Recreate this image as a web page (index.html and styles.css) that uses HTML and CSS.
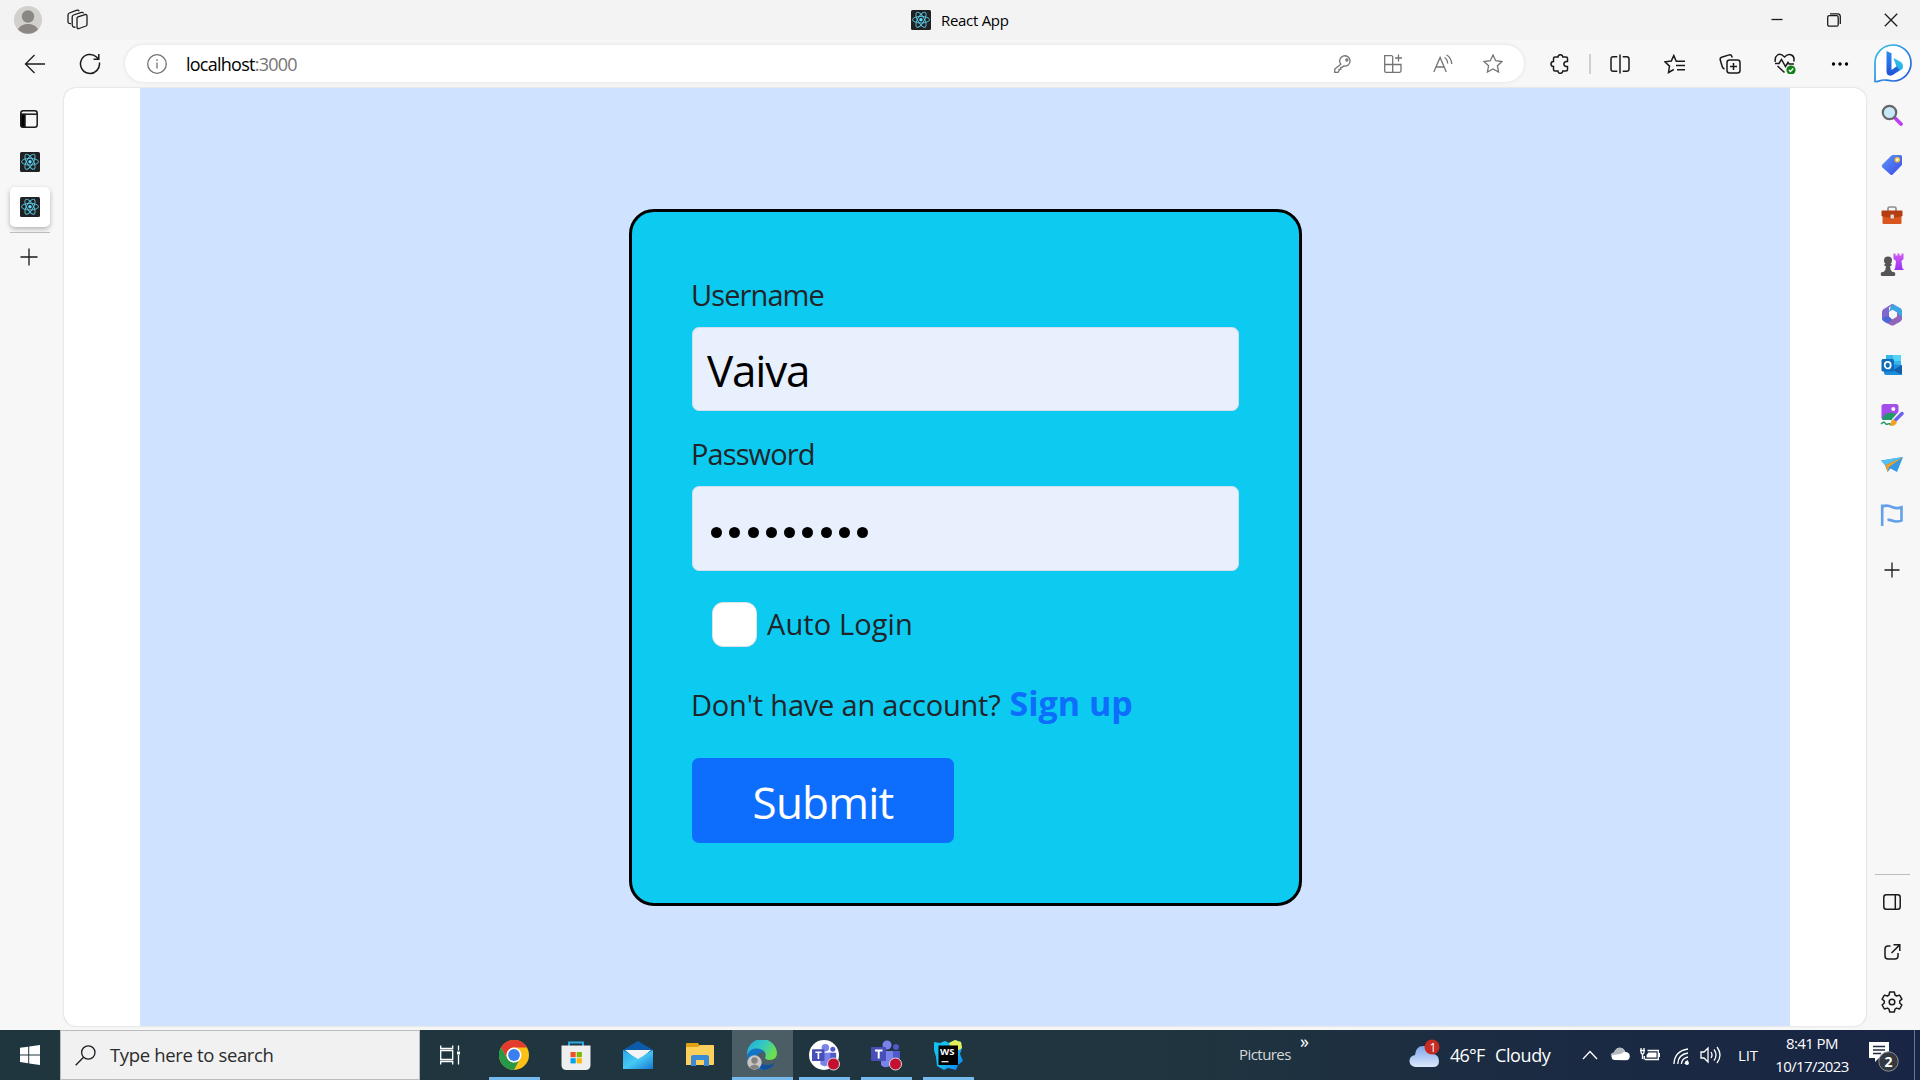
FILE: index.html
```html
<!DOCTYPE html>
<html lang="en">
<head>
<meta charset="utf-8">
<title>React App</title>
<link rel="stylesheet" href="styles.css">
</head>
<body>
<svg class="defs" width="0" height="0">
  <defs>
    <symbol id="react" viewBox="0 0 20 20">
      <rect width="20" height="20" rx="1.5" fill="#202123"/>
      <g fill="none" stroke="#58c4dc" stroke-width=".95">
        <ellipse cx="10" cy="9.7" rx="8.5" ry="3.3"/>
        <ellipse cx="10" cy="9.7" rx="8.5" ry="3.3" transform="rotate(60 10 9.7)"/>
        <ellipse cx="10" cy="9.7" rx="8.5" ry="3.3" transform="rotate(120 10 9.7)"/>
      </g>
      <circle cx="10" cy="9.7" r="1.7" fill="#61dafb"/>
    </symbol>
    <symbol id="teams" viewBox="0 0 30 30">
      <circle cx="25" cy="7" r="3" fill="#5059c9"/><circle cx="16" cy="5" r="4.5" fill="#7b83eb"/>
      <path d="M20 11h9v8a5 5 0 0 1-9 3z" fill="#5059c9"/>
      <path d="M10 11h12v9a7 7 0 0 1-12 5z" fill="#7b83eb"/>
      <rect x="0" y="7" width="15" height="14" rx="1" fill="#464eb8"/>
      <path d="M4 10.500h7.500M7.700 10.500v8" stroke="#fff" stroke-width="2"/>
    </symbol>
    <linearGradient id="bing" x1="0" y1="0" x2="1" y2="1"><stop offset="0" stop-color="#35c4f0"/><stop offset="1" stop-color="#2457d6"/></linearGradient>
    <linearGradient id="bing-stem" x1="0" y1="0" x2="0" y2="1"><stop offset="0" stop-color="#2f8df0"/><stop offset="1" stop-color="#1f52d8"/></linearGradient>
    <linearGradient id="bing-bowl" x1="1" y1="0" x2="0" y2="1"><stop offset="0" stop-color="#2bd3e6"/><stop offset="1" stop-color="#2b7bf0"/></linearGradient>
    <linearGradient id="tag" x1="0" y1="0" x2="1" y2="1"><stop offset="0" stop-color="#5a9bf8"/><stop offset="1" stop-color="#3f46e8"/></linearGradient>
    <linearGradient id="rook" x1="0" y1="0" x2="0" y2="1"><stop offset="0" stop-color="#d05cf5"/><stop offset="1" stop-color="#9b30f0"/></linearGradient>
    <linearGradient id="edge" x1="0" y1="0" x2="1" y2=".5"><stop offset="0" stop-color="#1fa8e0"/><stop offset=".55" stop-color="#35c9c2"/><stop offset="1" stop-color="#6be04c"/></linearGradient>
    <linearGradient id="mail" x1="0" y1="0" x2="1" y2="1"><stop offset="0" stop-color="#28a8e8"/><stop offset=".5" stop-color="#46c8f5"/><stop offset="1" stop-color="#1678d0"/></linearGradient>
    <linearGradient id="cloud" x1="0" y1="0" x2="0" y2="1"><stop offset="0" stop-color="#7ba6ea"/><stop offset="1" stop-color="#dde8fb"/></linearGradient>
    <linearGradient id="ws" x1="0" y1="0" x2="1" y2="1"><stop offset="0" stop-color="#12c2ef"/><stop offset=".5" stop-color="#19bcf0"/><stop offset="1" stop-color="#087cfa"/></linearGradient>
  </defs>
</svg>

<header class="titlebar">
  <svg class="avatar" width="28" height="28" viewBox="0 0 28 28"><circle cx="14" cy="14" r="14" fill="#d2d0cc"/><circle cx="14" cy="10.500" r="6.200" fill="#8b8783"/><path d="M4 23.500c2-4 6-5.500 10-5.500s8 1.500 10 5.500a14 14 0 0 1-20 0z" fill="#8b8783"/></svg>
  <svg class="workspaces ico" width="22" height="22" viewBox="0 0 22 22"><path d="M10 9.500q0-1.200 1-1.600l7-2.300q2-.5 2 1.400v8.500q0 1.100-1 1.500l-7 2.500q-2 .5-2-1.500zM8.500 18.200q-3.300.4-3.300-2.700V8q0-1.500 1.300-2l8-2.600q1.800-.4 2.200 1M4 14.600q-3 .3-3-2V6q0-1.500 1.400-2l7.600-2.800q1.500-.4 2.200 1"/></svg>
  <div class="window-title"><svg width="20" height="20"><use href="#react"/></svg><span>React App</span></div>
  <div class="window-buttons">
    <svg class="ico" width="14" height="14" viewBox="0 0 14 14"><path d="M1.500 6.500h11"/></svg>
    <svg class="ico" width="14" height="14" viewBox="0 0 14 14"><rect x=".7" y="2.700" width="10.500" height="10.500" rx="1.500"/><path d="M3 .8h7.500q2.800 0 2.800 2.800V11"/></svg>
    <svg class="ico" width="14" height="14" viewBox="0 0 14 14"><path d="M.8.8l12.400 12.400M13.200.8L.8 13.200"/></svg>
  </div>
</header>

<nav class="toolbar">
  <span class="cell back"><svg class="ico" width="22" height="20" viewBox="0 0 22 20"><path d="M21 10H1.500M10.500 1l-9 9 9 9"/></svg></span>
  <span class="cell reload"><svg class="ico thick" width="22" height="22" viewBox="0 0 22 22"><path d="M20.400 9.500A9.500 9.500 0 1 1 17.500 4l2 2M19.800 1v5.300h-5.300"/></svg></span>
  <div class="address">
    <svg class="ico gray" width="20" height="20" viewBox="0 0 20 20"><circle cx="10" cy="10" r="9.300"/><path d="M10 8.500v6M10 5.300v1.600"/></svg>
    <span class="url">localhost<span class="port">:3000</span></span>
    <div class="address-actions">
      <span class="cell"><svg class="ico gray" width="18" height="18" viewBox="0 0 18 18"><path d="M6.800 9.200A5.200 5.200 0 1 1 9.600 11L8.300 12.300H6.800v2H5v1.600L4 17.300H.8v-3.200z"/><circle cx="12.800" cy="5" r="1"/></svg></span>
      <span class="cell"><svg class="ico gray" width="20" height="20" viewBox="0 0 20 20"><path d="M9.200 1.700H1.700V17q0 1.300 1.300 1.300h13.500q1.500 0 1.500-1.500V10.500H1.700M9.700 1.700v16.600M15.500.5v7M12 4h7"/></svg></span>
      <span class="cell"><svg class="ico gray" width="20" height="20" viewBox="0 0 20 20"><path d="M.8 18L7.100 3.400 13.300 18M3 13h8.200M11.500 3.500q2.800 1.500 3.200 6M13.500 1q4.700 2.400 5.300 9"/></svg></span>
      <span class="cell"><svg class="ico gray" width="20" height="20" viewBox="0 0 20 20"><path d="M10 1l2.700 5.700 6.300.8-4.600 4.300 1.200 6.200L10 15l-5.600 3 1.200-6.200L1 7.500l6.300-.8z"/></svg></span>
    </div>
  </div>
  <div class="actions">
    <span class="cell"><svg class="ico thick" width="20" height="20" viewBox="0 0 20 20"><path d="M5 3h3q0-2.300 2.400-2.300T12.800 3H16q1.500 0 1.500 1.500v3h-1q-2.600.3-2.600 2.500t2.600 2.500h1v3Q17.500 17 16 17h-3.200q0 2.300-2.400 2.300T8 17H5q-1.500 0-1.500-1.500v-3Q1 12.500 1 10t2.500-2.500v-3Q3.500 3 5 3z"/></svg></span>
    <i class="sep"></i>
    <span class="cell"><svg class="ico thick" width="20" height="20" viewBox="0 0 20 20"><path d="M7.300 2.700H3.200Q1 2.700 1 5v10q0 2.300 2.200 2.300h4.100M10 .5v19M12.700 2.700h4Q19 2.700 19 5v10q0 2.300-2.300 2.300h-4"/></svg></span>
    <span class="cell"><svg class="ico thick" width="22" height="20" viewBox="0 0 22 20"><path d="M14.500 7.200h-2.300L9.800 1.500 7.300 7 1 7.800l4.500 4.300L4.500 18.500l5.300-3M13 7.200h8M12 11.500h9M13 15.800h8"/></svg></span>
    <span class="cell"><svg class="ico thick" width="22" height="20" viewBox="0 0 22 20"><rect x="8" y="6" width="13" height="13" rx="2.500"/><path d="M14.500 9v7M11 12.500h7M5.500 15Q3.700 14.500 3.200 12.500L1.200 5.800Q.8 3.900 2.600 3.300l7.600-2.400q2-.4 2.600 1.300l.4 1.300"/></svg></span>
    <span class="cell"><svg class="ico thick" width="22" height="21" viewBox="0 0 22 21"><path d="M1.300 8.800Q.5 4 3.500 2T10.500 4Q14 .2 17.500 2t2.200 6.500M1 10.500h4l2.500-4 4 7 2.500-4 1 1.500h5M3.500 13l7 6.500"/><circle cx="17" cy="17" r="4.600" fill="#128019" stroke="none"/><path d="M15 17l1.500 1.500 2.700-3" stroke="#fff"/></svg></span>
    <span class="cell"><svg width="18" height="6" viewBox="0 0 18 6"><circle cx="2.500" cy="3" r="1.700"/><circle cx="9" cy="3" r="1.700"/><circle cx="15.500" cy="3" r="1.700"/></svg></span>
    <span class="cell bing"><svg width="38" height="39" viewBox="0 0 38 39"><path d="M1 37.500V19.500A18 18 0 1 1 19.500 37q-3 0-7-.8-4-.6-7 .7-2.500 1-4.500.6z" fill="#fff" stroke="url(#bing)" stroke-width="1.700"/><path d="M19.500 14l7.500 4q3 2.500 1.500 7L18.500 31q-2.500 1.200-4.500-1l8.500-7.500z" fill="url(#bing-bowl)"/><path d="M12.500 7l5 2.200v16.800l5-3.500 3 3.500-7 5q-6 2-6-4z" fill="url(#bing-stem)"/></svg></span>
  </div>
</nav>

<main class="browser">
  <aside class="tabs">
    <svg class="ico thick pane" width="18" height="18" viewBox="0 0 18 18"><rect x=".8" y=".8" width="16.400" height="16.400" rx="2.500"/><path d="M1 4.200h16"/><path d="M1 4.500h4V17H3q-2 0-2-2z" fill="#000"/></svg>
    <svg width="20" height="20"><use href="#react"/></svg>
    <div class="tab-active"><svg width="20" height="20"><use href="#react"/></svg></div>
    <i class="tab-line"></i>
    <svg class="ico new-tab" width="18" height="18" viewBox="0 0 18 18"><path d="M9 .5v17M.5 9h17"/></svg>
  </aside>

  <section class="viewport">
    <div class="page">
      <form class="card">
        <label class="label">Username</label>
        <div class="field name">Vaiva</div>
        <label class="label second">Password</label>
        <div class="field password"><i></i><i></i><i></i><i></i><i></i><i></i><i></i><i></i><i></i></div>
        <div class="check"><span class="box"></span><span class="auto">Auto Login</span></div>
        <p class="account"><span class="ask">Don't have an account?</span><a class="signup">Sign up</a></p>
        <button class="submit" type="button">Submit</button>
      </form>
    </div>
  </section>

  <aside class="sidebar">
    <span class="side"><svg width="22" height="22" viewBox="0 0 22 22"><path d="M14 14l6 6" stroke="#bd40ef" stroke-width="3.800" stroke-linecap="round"/><circle cx="8.500" cy="8.500" r="6.700" fill="#c8e7fb" stroke="#666" stroke-width="2.200"/></svg></span>
    <span class="side"><svg width="22" height="22" viewBox="0 0 22 22"><path d="M12 1h7.500Q21 1 21 2.500V10q0 1-.8 1.800l-8.500 8.700q-1.200 1-2.400 0L1.200 13.200q-1-1.200 0-2.400l9-9Q11 1 12 1z" fill="url(#tag)"/><circle cx="16.300" cy="5.800" r="2.100" fill="#fff" stroke="#f5be27" stroke-width="1.400"/></svg></span>
    <span class="side"><svg width="22" height="20" viewBox="0 0 22 20"><path d="M7 6V3.500Q7 2 8.500 2h5Q15 2 15 3.500V6" fill="none" stroke="#8b9094" stroke-width="1.700"/><path d="M1.500 9h19v9q0 1-1 1h-17q-1 0-1-1z" fill="#d9561f"/><path d="M1.500 5.500h19q1 0 1 1V11q-10 3-21 0V6.500q0-1 1-1z" fill="#b43d12"/><rect x="9.500" y="9.500" width="3.500" height="4" rx="1" fill="#d8dde0"/></svg></span>
    <span class="side"><svg width="24" height="24" viewBox="0 0 24 24"><path d="M13.500.5h2v2h2v-2h2v2h2v-2h2V6l-2 2 .8 7 1.700 2h-10l1.200-2L16 8l-2.500-2z" fill="url(#rook)"/><g fill="#555"><circle cx="8" cy="7.500" r="4"/><path d="M4.500 11h7v2H10q0 4 2.500 6h-9Q6 17 6 13H4.500z"/><rect x=".8" y="19" width="14.400" height="4" rx="1.500"/></g></svg></span>
    <span class="side"><svg width="22" height="22" viewBox="0 0 22 22"><path d="M10.500.3h2L20 4.500l1 2V14l-5-2.500V8.500l-4.500-2.800L8 8z" fill="#3da5e5"/><path d="M10.500.3l2 .2L8 3.500V12l-5 5-2-2V7.500l1-2z" fill="#8168cf"/><path d="M21 13v2.500L19.500 17.500l-7 4h-2L3.500 18l4-.5 8.500-5V9z" fill="#9266ba"/><path d="M1 14.500l6.500-3 4 4.500-5 3L2 17z" fill="#4868d5"/><path d="M8.200 8.500l3.300-2.200L15.500 8.500v4L11.500 15l-3.300-2.500z" fill="#f7f7f7"/></svg></span>
    <span class="side"><svg width="22" height="22" viewBox="0 0 22 22"><path d="M5 1h15v12H5z" fill="#36b5ec"/><path d="M12 1h8v6h-8z" fill="#55d3f7"/><path d="M3 10l18 1v8q0 2-2 2H5q-2 0-2-2z" fill="#1d8ddd"/><path d="M21 11l-9 5 9 5z" fill="#135fa8"/><rect x=".5" y="5" width="12.500" height="12.500" rx="1.500" fill="#0d6cbd"/><ellipse cx="6.700" cy="11.200" rx="3" ry="3.300" fill="none" stroke="#fff" stroke-width="1.700"/></svg></span>
    <span class="side"><svg width="24" height="24" viewBox="0 0 24 24"><rect x="1.500" y="1" width="17" height="16" rx="2.500" fill="#a54dea"/><path d="M2 15.500Q7 6 18 12q0 5-2.500 5H4q-2 0-2-1.500z" fill="#219a68"/><circle cx="13.300" cy="6" r="2" fill="#fff"/><path d="M1 21q3-3 4-1t3 1 3 1" fill="none" stroke="#219a68" stroke-width="1.500"/><path d="M22 9.500l-8 9" stroke="#f7f7f7" stroke-width="6"/><path d="M22 10.500l-6.500 6.500" stroke="#6963ed" stroke-width="3.500" stroke-linecap="round"/><path d="M14 16.500l3 3q-2 4-7.500 3.500 1.500-1 1.500-3.500t3-3z" fill="#f2a51c"/></svg></span>
    <span class="side"><svg width="22" height="18" viewBox="0 0 22 18"><path d="M0 4.500L22 1l-6 15-6.500-3.500L6.500 16 4 9z" fill="#3498e9"/><path d="M4.500 9L22 1 8 11l-1.500 5z" fill="#f0a01d"/><path d="M0 4.500L22 1 4 9z" fill="#56c0f5"/></svg></span>
    <span class="side"><svg width="24" height="24" viewBox="0 0 24 24"><path d="M2.200 23V1.500M2.500 3.500Q7 1.500 12 4q5 2 9.500.3v13.200q-5 2-9.500 0-2.500-1-4.500-.5" fill="none" stroke="#62a0ea" stroke-width="2.600"/></svg></span>
    <span class="side plus"><svg class="ico" width="16" height="16" viewBox="0 0 16 16"><path d="M8 .5v15M.5 8h15"/></svg></span>
    <i class="side-line"></i>
    <span class="side"><svg class="ico thick" width="18" height="16" viewBox="0 0 18 16"><rect x=".8" y=".8" width="16.400" height="14.400" rx="2.500"/><path d="M12.300 1v14"/></svg></span>
    <span class="side"><svg class="ico thick" width="17" height="16" viewBox="0 0 17 16"><path d="M6.500 2H4Q1 2 1 5v7q0 3 3 3h7q3 0 3-3V9M9.500.8H15.800V7M15.500 1.100L7.500 9"/></svg></span>
    <span class="side"><svg class="ico thick" width="22" height="22" viewBox="0 0 22 22"><path d="M8.700 1h4.600l.7 3 1.600 1 3-.9 2.300 4L18.700 10v2l2.200 2-2.300 4-3-.9-1.600 1-.7 2.900H8.700L8 18.100l-1.600-1-3 .9-2.300-4L3.300 12v-2L1.100 8.100l2.300-4 3 .9L8 4z" stroke-linejoin="round"/><circle cx="11" cy="11" r="2.800"/></svg></span>
  </aside>
</main>

<footer class="taskbar">
  <span class="start"><svg width="20" height="20" viewBox="0 0 20 20"><path d="M0 2.800l8.200-1.100v7.700H0zM9.200 1.500L20 0v9.400H9.200zM0 10.400h8.200v7.800L0 17zM9.200 10.400H20V20L9.200 18.500z" fill="#fff"/></svg></span>
  <div class="search"><svg class="ico" width="21" height="21" viewBox="0 0 21 21"><circle cx="13.300" cy="7.500" r="6.700"/><path d="M8.500 12.300L.7 20.200"/></svg><span class="hint">Type here to search</span></div>
  <span class="taskview"><svg class="ico white" width="20" height="20" viewBox="0 0 20 20"><path d="M.7.500v3h12v-3M.7 19.500v-3h12v3M.7 5.500h12v9H.7zM18.500.500v5M18.500 10v9.500"/><path d="M17 6.500h3v3h-3z" fill="#fff" stroke="none"/></svg></span>
  <div class="apps">
    <span class="app open"><svg width="30" height="30" viewBox="0 0 30 30"><circle cx="15" cy="15" r="15" fill="#fbc116"/><path d="M2 7.500A15 15 0 0 1 28 7.500H15A7.500 7.500 0 0 0 8.500 18.700z" fill="#e33b2e"/><path d="M2 7.500l6.500 11.300A7.500 7.500 0 0 0 20 20.500L15 30A15 15 0 0 1 2 7.500z" fill="#279847"/><circle cx="15" cy="15" r="7.500" fill="#fff"/><circle cx="15" cy="15" r="5.900" fill="#397ff0"/></svg></span>
    <span class="app"><svg width="30" height="30" viewBox="0 0 30 30"><path d="M8 7V2.500h14V7" fill="none" stroke="#2ca9e6" stroke-width="2"/><path d="M.5 5.500h29V25q0 5-5 5h-19q-5 0-5-5z" fill="#eee"/><path d="M9.500 12h5.200v5.200H9.500z" fill="#ef5025"/><path d="M15.700 12h5.200v5.200h-5.200z" fill="#80b900"/><path d="M9.500 18.200h5.200v5.200H9.500z" fill="#00a2ed"/><path d="M15.700 18.200h5.200v5.200h-5.200z" fill="#ffb800"/></svg></span>
    <span class="app"><svg width="30" height="30" viewBox="0 0 30 30"><path d="M0 10L15 1l15 9v6H0z" fill="#0c5ba8"/><path d="M2 10h26L15 21z" fill="#f4f4f4"/><path d="M0 10l15 9 15-9v19H0z" fill="url(#mail)"/></svg></span>
    <span class="app"><svg width="30" height="30" viewBox="0 0 30 30"><path d="M1 4q0-1 1-1h11l2 3h13q1 0 1 1v4H1z" fill="#e2a113"/><path d="M1 7h12l2-2h13q1 0 1 1v18q0 1-1 1H1z" fill="#fcd05c"/><path d="M6 26V17q0-2 2-2h14q2 0 2 2v9h-5v-6h-8v6z" fill="#3a8bd7"/></svg></span>
    <span class="app open current"><svg width="30" height="30" viewBox="0 0 30 30"><path d="M0 15A15 15 0 0 1 30 13q0 7-7.500 7-5.500 0-4-3.500 1-5.500-5-7Q5 8.500 0 15z" fill="url(#edge)"/><path d="M0 15q3-7 9.500-6.500 6 0 7.500 4Q10 11 10 18.500q1 9 10 11Q4 31.500.3 18z" fill="#1375c6"/><path d="M11 16.500q1 9.500 11 8.500 3-.5 6-2.500-3.500 7-11.500 7.500-8-3-7-10.500z" fill="#12509b"/><circle cx="7.500" cy="22.500" r="7.200" fill="#c9c7c5"/><circle cx="7.500" cy="20.500" r="3.200" fill="#85817e"/><path d="M2.500 27q5-5 10 0-5 4.500-10 0z" fill="#85817e"/></svg></span>
    <span class="app open"><svg width="32" height="32" viewBox="0 0 32 32"><circle cx="16" cy="16" r="15" fill="#fff"/><svg x="4" y="4.500" width="25" height="25"><use href="#teams"/></svg><circle cx="25.500" cy="25" r="6" fill="#c50f30" stroke="#ddd" stroke-width="1"/></svg></span>
    <span class="app open"><svg width="32" height="32" viewBox="0 0 32 32"><svg x="1" y="1" width="30" height="30"><use href="#teams"/></svg><circle cx="25.500" cy="25" r="6" fill="#c50f30" stroke="#ddd" stroke-width="1"/></svg></span>
    <span class="app open"><svg width="30" height="30" viewBox="0 0 30 30"><path d="M1 2l6 1 5-2 4 2 6-3 6 2 1 6-2 6 3 7-5 4-2 5-8-2-4 2-7-4-1-9-2-7z" fill="url(#ws)"/><path d="M16 3l6-3 6 2 1 6-3 2-8-3z" fill="#e4ee55"/><rect x="5.500" y="5.500" width="19.500" height="19.500" fill="#000"/><path d="M8.500 21.700h7" stroke="#fff" stroke-width="1.200"/><text x="7" y="15" class="ws-text">WS</text></svg></span>
  </div>
  <div class="tray">
    <span class="pictures">Pictures</span><span class="more">»</span>
    <svg class="weather" width="31" height="32" viewBox="0 0 31 32"><path d="M7 29a6 6 0 0 1-1-12Q7 7 15.500 8q7 0 8.500 8 6 1 6 7t-6 6z" fill="url(#cloud)"/><circle cx="23" cy="9" r="7.500" fill="#c72b22"/><text x="20.400" y="14" class="weather-n">1</text></svg>
    <span class="temp">46°F</span><span class="cloudy">Cloudy</span>
    <svg class="ico white chevron" width="16" height="10" viewBox="0 0 16 10"><path d="M1 9l7-7.500L15 9"/></svg>
    <svg class="onedrive" width="20" height="14" viewBox="0 0 20 14"><path d="M4 13a4 4 0 0 1 0-7.500Q6 .5 10 .8t5 4q5 .5 4.800 4.500T16 13.300z" fill="#fff"/><path d="M.5 8.500Q1 5.500 4 5.500 6 .5 10 .8t5 4q-2 .2-3.500 2z" fill="#b5babf"/></svg>
    <svg class="ico white battery" width="20" height="16" viewBox="0 0 20 16"><path d="M7.500 3.500h10.800v9H5M4.300 9v3.500M1 1v3.500q0 2.500 1.500 2.500T4 4.500V1M0 3.500h5M2.500 7v5"/><path d="M8.500 5.500h8v5H6.500V8z" fill="#fff" stroke="none"/><path d="M19.500 6v4"/></svg>
    <svg class="ico white wifi" width="17" height="17" viewBox="0 0 17 17"><path d="M1 16Q1.500 3 15 1M4.700 16Q5 6.500 15 5M8.400 16q.5-6 6.600-7M12 16q.3-2.500 3-3.500"/><circle cx="14" cy="15" r="1.300" fill="#fff"/></svg>
    <svg class="ico white speaker" width="22" height="18" viewBox="0 0 22 18"><path d="M1 6h3l4-4v14l-4-4H1zM11 6q2 3 0 6M14 3.500q4 5.500 0 11M17 1q6 8 0 16"/></svg>
    <span class="lang">LIT</span>
    <div class="clock"><span>8:41 PM</span><span class="date">10/17/2023</span></div>
    <svg class="notify" width="32" height="32" viewBox="0 0 32 32"><path d="M1 2h20v16H11l-4 4v-4H1z" fill="#fff"/><path d="M5 6.500h12M5 10h12M5 13.500h8" stroke="#1d2b44" stroke-width="1.300"/><circle cx="20.500" cy="21.500" r="9.700" fill="#34383f" stroke="#8a9098"/><text x="16.400" y="26.500" class="notify-n">2</text></svg>
    <i class="show-desktop"></i>
  </div>
</footer>
</body>
</html>
```
FILE: styles.css
```css
* { box-sizing: border-box; }
body {
  margin: 0;
  width: 1920px;
  height: 1080px;
  overflow: hidden;
  display: grid;
  grid-template-rows: 40px 48px 942px 50px;
  background: #f7f7f7;
  font-family: "Open Sans", "Noto Sans", sans-serif;
  color: #000;
}
svg { display: block; flex: none; }
span, label, a { white-space: nowrap; }
.defs { position: absolute; }
.ico { fill: none; stroke: #1b1b1b; stroke-width: 1.3; }
.thick { stroke-width: 1.5; }
.gray { stroke: #737373; }
.white { stroke: #fff; }

.titlebar { display: flex; align-items: center; background: #f3f3f3; }
.avatar { margin-left: 14px; }
.workspaces { margin-left: 25px; }
.window-title { display: flex; align-items: center; gap: 10px; margin-left: 822px; font-size: 15px; letter-spacing: -0.3px; }
.window-buttons { display: flex; gap: 43px; margin-left: auto; padding-right: 22px; }

.toolbar { display: flex; align-items: center; padding: 0 0 1px 8px; }
.cell { display: flex; align-items: center; justify-content: center; width: 55px; height: 46px; }
.back { width: 54px; }
.reload { width: 56px; }
.address {
  display: flex;
  align-items: center;
  width: 1399px;
  height: 37px;
  margin-left: 7px;
  padding: 0 6px 0 22px;
  background: #fff;
  border-radius: 19px;
  box-shadow: 0 0 4px rgba(0, 0, 0, .1);
}
.url { margin-left: 19px; font-size: 18px; letter-spacing: -0.75px; }
.port { color: #767676; }
.address-actions { display: flex; margin-left: auto; }
.address-actions .cell { width: 50px; }
.actions { display: flex; align-items: center; margin-left: 8px; }
.sep { width: 2px; height: 20px; margin: 0 1px 0 2px; background: #cfcfcf; }
.bing { width: 51px; }

.browser { display: grid; grid-template-columns: 64px 1802px 54px; }
.tabs { display: flex; flex-direction: column; align-items: center; padding: 22px 5px 0 0; }
.pane { margin-right: 2px; margin-bottom: 24px; }
.tab-active { display: flex; align-items: center; justify-content: center; width: 40px; height: 40px; margin-top: 15px; background: #fff; border-radius: 5px; box-shadow: 0 2px 5px rgba(0, 0, 0, .28); }
.tab-line { width: 40px; height: 1px; margin-top: 5px; background: #bdbdbd; }
.new-tab { margin: 15px 1px 0 0; }
.viewport { height: 938px; padding: 0 76px; background: #fff; border-radius: 12px; box-shadow: 0 0 2px rgba(0, 0, 0, .22); }
.page { height: 938px; padding: 121px 0 0 489px; background: #cfe2ff; }
.card { display: flex; flex-direction: column; align-items: flex-start; width: 673px; height: 697px; padding: 60px; background: #0dcaf0; border: 3px solid #000; border-radius: 25px; }
.label { display: block; height: 45px; margin: 0 0 10px -1px; font-size: 29px; line-height: 45px; color: #212529; letter-spacing: -0.9px; }
.second { margin-top: 20px; }
.field { display: flex; align-items: center; width: 547px; height: 84px; padding: 1px 0 0 14px; background: #e8f0fe; border: 1px solid #d3dcea; border-radius: 7px; font-size: 44px; }
.name { letter-spacing: -1.2px; }
.password { height: 85px; gap: 7.3px; padding: 7px 0 0 18px; }
.password i { width: 11px; height: 11px; border-radius: 50%; background: #000; }
.check { display: flex; align-items: center; gap: 10px; height: 45px; margin: 31px 0 0 20px; }
.box { width: 45px; height: 45px; background: #fff; border: 1px solid #dee2e6; border-radius: 11px; }
.auto { padding-bottom: 2px; font-size: 29px; letter-spacing: 0.1px; color: #212529; }
.account { display: flex; align-items: baseline; gap: 9px; height: 52px; margin: 30px 0 0 -1px; line-height: 52px; font-size: 29px; color: #212529; }
.ask { letter-spacing: -0.2px; }
.signup { font-size: 34px; font-weight: 700; letter-spacing: 0; color: #0d6efd; }
.submit { width: 262px; height: 85px; margin-top: 29px; padding: 3px 0 0; border: 0; border-radius: 7px; background: #0d6efd; color: #fff; font: 44px "Open Sans", "Noto Sans", sans-serif; letter-spacing: -0.8px; }

.sidebar { display: flex; flex-direction: column; padding: 2px 2px 0 0; }
.side { display: flex; align-items: center; justify-content: center; height: 50px; flex: none; }
.plus { height: 60px; }
.side-line { width: 35px; height: 1px; margin: 274px 0 2px 9px; background: #bdbdbd; flex: none; }

.taskbar { display: flex; background: linear-gradient(90deg, #20363f 0%, #20353f 60%, #1b2b42 80%, #192544 100%); color: #fff; }
.start { display: flex; align-items: center; justify-content: center; width: 60px; }
.search { display: flex; align-items: center; gap: 14px; width: 360px; padding-left: 14px; background: #f1f1f1; border: 1px solid #bbb; color: #2b2b2b; font-size: 18.5px; letter-spacing: -0.35px; }
.hint { padding-bottom: 2px; }
.taskview { display: flex; align-items: center; margin-left: 20px; width: 63px; }
.apps { display: flex; }
.app { position: relative; display: flex; align-items: center; justify-content: center; width: 62px; }
.apps .app:first-child { margin-left: -20px; }
.open::after { content: ""; position: absolute; left: 6px; right: 5px; bottom: 0; height: 3px; background: #76b9ed; }
.current { background: linear-gradient(#4b5d65, #4b5d65) 1px 0 / 61px 100% no-repeat; }
.current::after { left: 1px; right: 0; }
.ws-text { font: 700 9.5px "Open Sans", sans-serif; fill: #fff; }
.tray { display: flex; align-items: center; margin-left: auto; width: 681px; }
.pictures { width: 61px; padding-bottom: 2px; color: #d5dadd; font-size: 15px; letter-spacing: -0.55px; }
.more { margin-bottom: 29px; width: 109px; font-size: 18px; }
.weather { margin-top: -3px; }
.temp { width: 45px; margin-left: 10px; font-size: 18px; letter-spacing: -0.8px; }
.cloudy { width: 56px; font-size: 18px; letter-spacing: -0.4px; }
.weather-n { font: 12px "Open Sans", sans-serif; fill: #fff; }
.chevron { margin-left: 31px; }
.onedrive { margin: 0 0 2px 12px; }
.battery { margin-left: 10px; }
.wifi { margin-left: 13px; margin-top: 2px; }
.speaker { margin-left: 10px; }
.lang { width: 21px; margin-left: 16px; font-size: 15px; letter-spacing: -0.1px; }
.clock { display: flex; flex-direction: column; align-items: center; width: 84px; margin-left: 11px; font-size: 15px; line-height: 23px; letter-spacing: -0.6px; }
.notify { margin: 2px 0 0 14px; }
.notify-n { font: 700 14px "Open Sans", sans-serif; fill: #fff; }
.show-desktop { width: 1px; height: 50px; margin-left: 14px; background: #69758a; }
```
